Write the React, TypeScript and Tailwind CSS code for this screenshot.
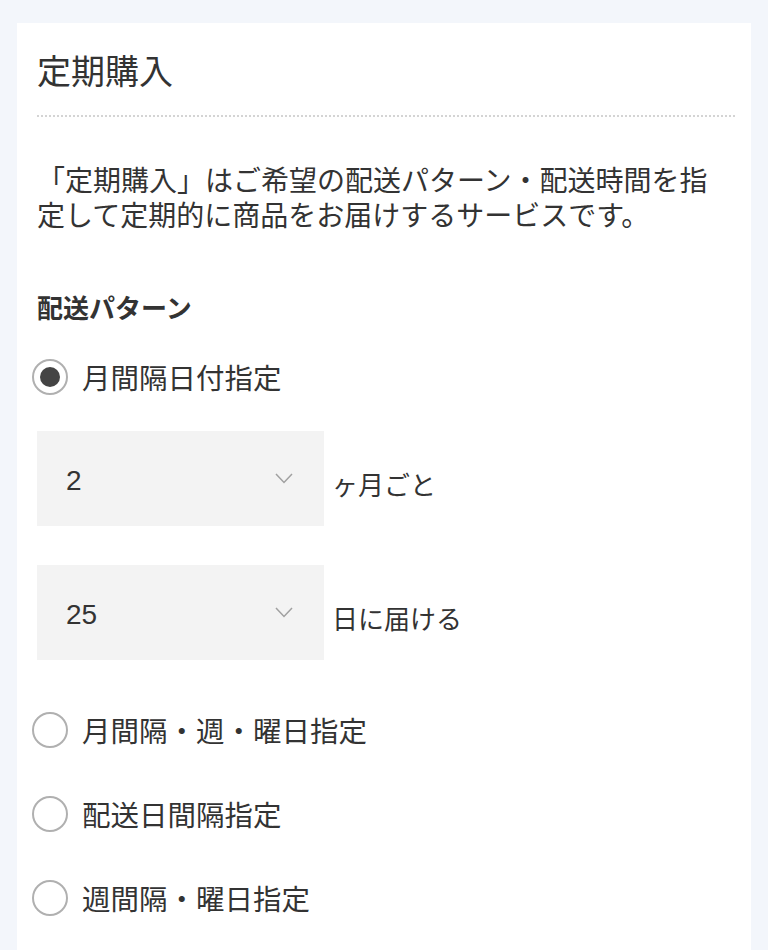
import React, { useState } from "react";

const FONT = { fontFamily: '"Noto Sans CJK JP", "Noto Sans", sans-serif' };

const PATTERNS = [
  "月間隔日付指定",
  "月間隔・週・曜日指定",
  "配送日間隔指定",
  "週間隔・曜日指定",
];

function Radio({ checked, label, onClick, className = "" }: { checked: boolean; label: string; onClick: () => void; className?: string }) {
  return (
    <button type="button" onClick={onClick} className={`flex items-center h-[40px] ml-[-5px] ${className}`}>
      <span className="flex items-center justify-center w-[36px] h-[36px] rounded-full border-2 border-[#b0b0b0] bg-white">
        {checked && <span className="w-[20px] h-[20px] rounded-full bg-[#444]" />}
      </span>
      <span className="ml-[14px] text-[28.5px] leading-[40px] text-[#333]">{label}</span>
    </button>
  );
}

function SelectBox({ value, suffix }: { value: string; suffix: string }) {
  return (
    <div className="flex items-center">
      <div className="flex items-center justify-between w-[287px] h-[95px] bg-[#f3f3f3] pl-[29px] pr-[31px]">
        <span className="mt-[4px] text-[28px] text-[#333]" style={{ fontFamily: '"Liberation Sans", Arial, sans-serif' }}>
          {value}
        </span>
        <svg width="18" height="11" viewBox="0 0 18 11" fill="none" className="mb-[1px]">
          <path d="M1 1 L9 9.5 L17 1" stroke="#a0a0a0" strokeWidth="1.5" />
        </svg>
      </div>
      <span className="ml-[8px] mt-[10px] text-[26px] text-[#333]">{suffix}</span>
    </div>
  );
}

export default function App() {
  const [pattern, setPattern] = useState(0);

  return (
    <div className="min-h-screen bg-[#f3f6fb] pt-[23px] px-[17px]" style={FONT}>
      <div className="bg-white pl-[20px] pr-[16px] pt-[21px] pb-[40px] min-h-[940px]">
        <h1 className="text-[34px] leading-[51px] text-[#333] pb-[20px] border-b-2 border-dotted border-[#d4d4d4]">
          定期購入
        </h1>

        <p className="mt-[45px] text-[28px] leading-[35px] text-[#333] pr-[4px]">
          「定期購入」はご希望の配送パターン・配送時間を指定して定期的に商品をお届けするサービスです。
        </p>

        <h2 className="mt-[55px] text-[26px] leading-[39px] font-bold text-[#333]">配送パターン</h2>

        <Radio className="mt-[31px]" checked={pattern === 0} label={PATTERNS[0]} onClick={() => setPattern(0)} />

        {pattern === 0 && (
          <div className="mt-[34px] flex flex-col gap-[39px]">
            <SelectBox value="2" suffix="ヶ月ごと" />
            <SelectBox value="25" suffix="日に届ける" />
          </div>
        )}

        <div className="mt-[50px] flex flex-col gap-[44px]">
          {PATTERNS.slice(1).map((p, i) => (
            <Radio key={p} checked={pattern === i + 1} label={p} onClick={() => setPattern(i + 1)} />
          ))}
        </div>
      </div>
    </div>
  );
}
